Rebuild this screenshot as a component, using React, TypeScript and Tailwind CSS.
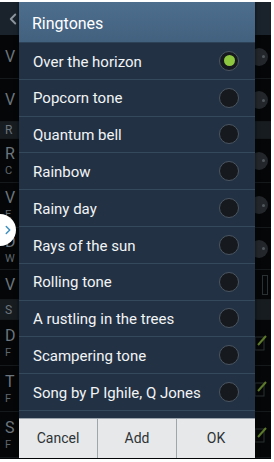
import { ChevronLeft, ChevronRight } from "lucide-react";

const tones = [
  "Over the horizon",
  "Popcorn tone",
  "Quantum bell",
  "Rainbow",
  "Rainy day",
  "Rays of the sun",
  "Rolling tone",
  "A rustling in the trees",
  "Scampering tone",
  "Song by P Ighile, Q Jones",
];

type BgRow = { h: string; a: string; b?: string; section?: boolean; right?: "dot" | "check" | "bar" };

const bgRows: BgRow[] = [
  { h: "h-[44px]", a: "V", right: "dot" },
  { h: "h-[43px]", a: "V", right: "dot" },
  { h: "h-[17px]", a: "R", section: true },
  { h: "h-[44px]", a: "R", b: "C", right: "dot" },
  { h: "h-[45px]", a: "V", b: "E", right: "dot" },
  { h: "h-[42px]", a: "D", b: "W", right: "dot" },
  { h: "h-[30px]", a: "V", right: "bar" },
  { h: "h-[20px]", a: "S", section: true },
  { h: "h-[46px]", a: "D", b: "F", right: "check" },
  { h: "h-[46px]", a: "T", b: "F", right: "check" },
  { h: "h-[46px]", a: "S", b: "F", right: "check" },
];

function Radio({ on }: { on: boolean }) {
  return (
    <div className="w-[20px] h-[20px] rounded-full bg-[#16191d] border border-[#4a5560] flex items-center justify-center">
      {on && <div className="w-[11px] h-[11px] rounded-full bg-[#8dc63f]" />}
    </div>
  );
}

export default function App() {
  return (
    <div
      className="w-[274px] h-[462px] bg-white pt-[2px] pr-[3px] pb-[3px] overflow-hidden"
      style={{ fontFamily: "Roboto, 'Liberation Sans', sans-serif" }}
    >
      <div className="relative w-full h-full bg-[#050607] overflow-hidden">
        {/* Background settings screen */}
        <div className="h-[33px] bg-[#1a232b] flex items-center pl-[4px]">
          <ChevronLeft size={18} strokeWidth={2.5} className="text-[#8d969e]" />
        </div>
        {bgRows.map((r, i) => (
          <div
            key={i}
            className={`${r.h} flex items-center justify-between pl-[5px] pr-[3px] border-b border-[#15191c] ${
              r.section ? "bg-[#161c20]" : ""
            }`}
          >
            <div className="flex flex-col leading-none">
              <span className={`${r.section ? "text-[12px]" : "text-[16px]"} text-[#6c757d]`}>{r.a}</span>
              {r.b && <span className="text-[11px] text-[#5f676e] mt-[3px]">{r.b}</span>}
            </div>
            {r.right === "dot" && (
              <div className="w-[18px] h-[18px] rounded-full bg-[#23272b] flex items-center justify-end pr-[3px]">
                <div className="w-[3px] h-[3px] rounded-full bg-[#50575d]" />
              </div>
            )}
            {r.right === "bar" && <div className="w-[6px] h-[20px] border border-[#2b3033]" />}
            {r.right === "check" && (
              <svg width="14" height="18" viewBox="0 0 14 18">
                <rect x="1" y="3" width="9" height="13" fill="none" stroke="#2b3033" />
                <path d="M4 11 L12 2" stroke="#5d7a2b" strokeWidth="2" />
              </svg>
            )}
          </div>
        ))}

        {/* Side handle */}
        <div className="absolute left-[-16px] top-[212px] w-[32px] h-[32px] rounded-full bg-white flex items-center justify-end pr-[1px]">
          <ChevronRight size={14} strokeWidth={2.5} className="text-[#3f8fc0]" />
        </div>

        {/* Dialog */}
        <div className="absolute left-[19px] top-0 w-[236px] h-[456px] flex flex-col bg-[#223244] shadow-[0_0_4px_rgba(0,0,0,0.6)]">
          <div className="h-[41px] shrink-0 bg-gradient-to-b from-[#4e6e8e] to-[#42617f] border-b border-[#2d4257] flex items-center pl-[13px] pt-[3px]">
            <span className="text-[16px] text-white">Ringtones</span>
          </div>
          {tones.map((t, i) => (
            <div
              key={t}
              className="h-[36.8px] shrink-0 flex items-center justify-between pl-[14px] pr-[16px] border-b border-[#35495d]"
            >
              <span className="text-[15px] text-[#f2f4f6] pt-[2px]">{t}</span>
              <Radio on={i === 0} />
            </div>
          ))}
          <div className="flex-1" />
          <div className="h-[40px] shrink-0 flex bg-[#e6e8ea] border-t border-[#9aa3ab]">
            {["Cancel", "Add", "OK"].map((b, i) => (
              <div
                key={b}
                className={`flex-1 flex items-center justify-center text-[14px] text-[#2e3336] ${
                  i > 0 ? "border-l border-[#9ea5ab]" : ""
                }`}
              >
                {b}
              </div>
            ))}
          </div>
        </div>
      </div>
    </div>
  );
}
